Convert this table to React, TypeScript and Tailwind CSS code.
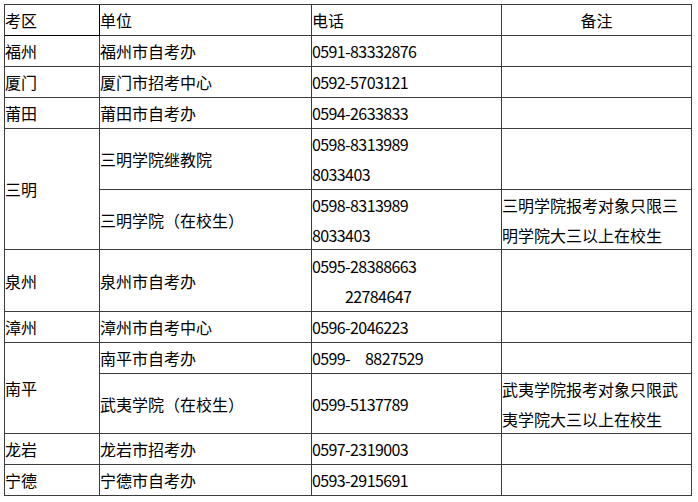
import React from 'react';

// 福建各考区自考办联系方式
const cell = 'flex items-center border-r border-b border-[#3c3c3c] whitespace-pre';
const multi = 'flex flex-col justify-center border-r border-b border-[#3c3c3c] leading-[30px] whitespace-pre';
const phone = `${cell} tracking-[-0.6px]`;
const phoneMulti = `${multi} tracking-[-0.6px]`;

const App: React.FC = () => {
  return (
    <div
      className="w-[698px] h-[502px] bg-white text-black text-[16px] pl-1 pt-1"
      style={{ fontFamily: '"Noto Sans CJK SC", "Noto Sans", sans-serif' }}
    >
      <div className="grid grid-cols-[95px_212px_190px_190px] grid-rows-[31px_31px_31px_31px_61px_60px_62px_31px_31px_60px_31px_31px] w-[688px] border-l border-t border-[#3c3c3c] leading-none">
        {/* header */}
        <div className="flex items-center border-r border-b border-black">考区</div>
        <div className={cell}>单位</div>
        <div className={cell}>电话</div>
        <div className={`${cell} justify-center`}>备注</div>

        <div className={cell}>福州</div>
        <div className={cell}>福州市自考办</div>
        <div className={phone}>0591-83332876</div>
        <div className={cell}></div>

        <div className={cell}>厦门</div>
        <div className={cell}>厦门市招考中心</div>
        <div className={phone}>0592-5703121</div>
        <div className={cell}></div>

        <div className={cell}>莆田</div>
        <div className={cell}>莆田市自考办</div>
        <div className={phone}>0594-2633833</div>
        <div className={cell}></div>

        {/* 三明 */}
        <div className={`${cell} row-span-2`}>三明</div>
        <div className={cell}>三明学院继教院</div>
        <div className={phoneMulti}>
          <span>0598-8313989</span>
          <span>8033403</span>
        </div>
        <div className={cell}></div>
        <div className={cell}>三明学院（在校生）</div>
        <div className={phoneMulti}>
          <span>0598-8313989</span>
          <span>8033403</span>
        </div>
        <div className={multi}>
          <span>三明学院报考对象只限三</span>
          <span>明学院大三以上在校生</span>
        </div>

        {/* 泉州 */}
        <div className={cell}>泉州</div>
        <div className={cell}>泉州市自考办</div>
        <div className={phoneMulti}>
          <span>0595-28388663</span>
          <span className="pl-[33px]">22784647</span>
        </div>
        <div className={cell}></div>

        <div className={cell}>漳州</div>
        <div className={cell}>漳州市自考中心</div>
        <div className={phone}>0596-2046223</div>
        <div className={cell}></div>

        {/* 南平 */}
        <div className={`${cell} row-span-2`}>南平</div>
        <div className={cell}>南平市自考办</div>
        <div className={phone}>
          <span>0599-</span>
          <span className="ml-[15px]">8827529</span>
        </div>
        <div className={cell}></div>
        <div className={cell}>武夷学院（在校生）</div>
        <div className={phone}>0599-5137789</div>
        <div className={multi}>
          <span>武夷学院报考对象只限武</span>
          <span>夷学院大三以上在校生</span>
        </div>

        <div className={cell}>龙岩</div>
        <div className={cell}>龙岩市招考办</div>
        <div className={phone}>0597-2319003</div>
        <div className={cell}></div>

        <div className={cell}>宁德</div>
        <div className={cell}>宁德市自考办</div>
        <div className={phone}>0593-2915691</div>
        <div className={cell}></div>
      </div>
    </div>
  );
};

export default App;
